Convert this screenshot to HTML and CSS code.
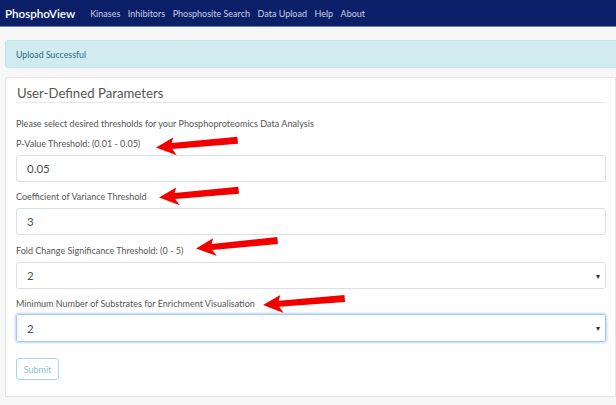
FILE: index.html
```html
<!DOCTYPE html>
<html>
<head>
<meta charset="utf-8">
<link rel="stylesheet" href="styles.css">
</head>
<body>
<nav class="navbar">
  <span class="brand">PhosphoView</span>
  <ul class="links">
    <li>Kinases</li>
    <li>Inhibitors</li>
    <li>Phosphosite Search</li>
    <li>Data Upload</li>
    <li>Help</li>
    <li>About</li>
  </ul>
</nav>
<main class="main">
  <div class="alert">Upload Successful</div>
  <section class="card">
    <h2 class="title">User-Defined Parameters</h2>
    <p class="desc">Please select desired thresholds for your Phosphoproteomics Data Analysis</p>
    <div class="group">
      <label class="label">P-Value Threshold: (0.01 - 0.05)</label>
      <div class="field">0.05</div>
    </div>
    <div class="group">
      <label class="label">Coefficient of Variance Threshold</label>
      <div class="field">3</div>
    </div>
    <div class="group">
      <label class="label">Fold Change Significance Threshold: (0 - 5)</label>
      <div class="field select"><span>2</span><span class="caret">▾</span></div>
    </div>
    <div class="group">
      <label class="label">Minimum Number of Substrates for Enrichment Visualisation</label>
      <div class="field select focus"><span>2</span><span class="caret">▾</span></div>
    </div>
    <button class="submit">Submit</button>
  </section>
</main>
<svg class="arrows" width="616" height="405" viewBox="0 0 616 405">
  <g fill="#f20000">
    <polygon transform="translate(156 147.5) rotate(-5)" points="0,0 18,-8.5 16,-3 82,-3.5 82,3.5 16,3 20,9.5"/>
    <polygon transform="translate(159 197.5) rotate(-5.2)" points="0,0 18,-8.5 16,-3 80,-3.5 80,3.5 16,3 20,9.5"/>
    <polygon transform="translate(196 248.5) rotate(-5.6)" points="0,0 18,-8.5 16,-3 82,-3.5 82,3.5 16,3 20,9.5"/>
    <polygon transform="translate(263 305) rotate(-4.5)" points="0,0 18,-8.5 16,-3 82,-3.5 82,3.5 16,3 20,9.5"/>
  </g>
</svg>
</body>
</html>
```
FILE: styles.css
```css
* { box-sizing: border-box; }
html, body { margin: 0; padding: 0; }
body {
  background: #f7f7f7;
  font-family: Lato, "Open Sans", "Liberation Sans", sans-serif;
  width: 616px;
  height: 405px;
  overflow: hidden;
  position: relative;
}
.navbar {
  display: flex;
  align-items: center;
  height: 27px;
  background: #0b1f68;
  border-bottom: 1px solid #6f7fb0;
  padding-left: 5px;
}
.brand {
  color: #ffffff;
  font-size: 11.6px;
  font-weight: 600;
  margin-right: 15px;
}
.links {
  display: flex;
  gap: 7.5px;
  list-style: none;
  margin: 0;
  padding: 0;
}
.links li {
  color: #c9cfe2;
  font-size: 9px;
}
.main {
  padding: 13px 0 0 5px;
}
.alert {
  height: 28px;
  margin-right: -6px;
  background: #d1ecf1;
  border: 1px solid #c2e3ea;
  border-radius: 3px;
  color: #2f6a77;
  font-size: 8.8px;
  display: flex;
  align-items: center;
  padding-left: 10px;
}
.card {
  margin-top: 9px;
  background: #ffffff;
  border: 1px solid #e5e5e5;
  padding: 6px 9px 16px 10px;
}
.title {
  margin: 0;
  font-size: 13.2px;
  line-height: 18px;
  font-weight: 400;
  color: #555555;
  padding-left: 1px;
  border-bottom: 1px solid #e6e6e6;
}
.desc {
  margin: 15px 0 8px;
  font-size: 9.1px;
  line-height: 12px;
  color: #555555;
}
.group {
  display: flex;
  flex-direction: column;
  margin-bottom: 9px;
}
.label {
  font-size: 9px;
  line-height: 12px;
  color: #555555;
  margin-bottom: 5px;
}
.group:nth-of-type(3) .label { margin-top: 1px; }
.group:nth-of-type(4) .label { margin-bottom: 4px; }
.field {
  height: 27px;
  border: 1px solid #dcdfe3;
  border-radius: 3px;
  display: flex;
  align-items: center;
  justify-content: space-between;
  padding: 0 5px 0 10px;
  font-size: 11.5px;
  color: #495057;
}
.caret {
  font-size: 8px;
  color: #333;
}
.focus {
  height: 28px;
  border-color: #9ec9f5;
  box-shadow: 0 0 0 1.5px rgba(120, 175, 240, 0.35);
}
.submit {
  margin-top: 7px;
  height: 22px;
  width: 43px;
  padding: 0;
  background: #ffffff;
  border: 1px solid #a6d6de;
  border-radius: 3px;
  color: #86c3cd;
  font-family: inherit;
  font-size: 9px;
}
.arrows {
  position: absolute;
  left: 0;
  top: 0;
  pointer-events: none;
}
```
